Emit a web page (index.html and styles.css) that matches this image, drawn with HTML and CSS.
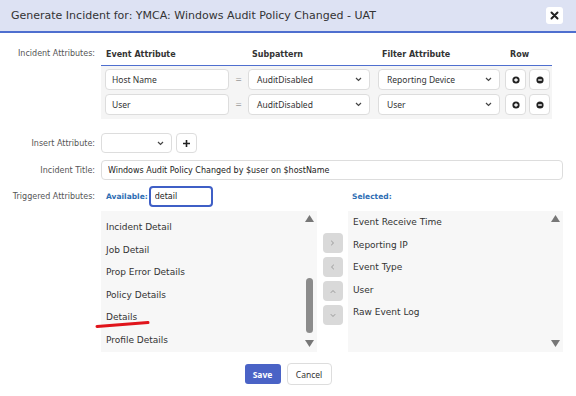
FILE: index.html
```html
<!DOCTYPE html>
<html lang="en">
<head>
    <meta charset="UTF-8">
    <title>Generate Incident</title>
    <link rel="stylesheet" href="styles.css">
</head>
<body>
    <div class="dialog">
        <div class="dialog-header">
            <span class="dialog-title">Generate Incident for: YMCA: Windows Audit Policy Changed - UAT</span>
            <button class="close-btn">
                <svg width="9" height="9" viewBox="0 0 9 9"><path d="M1.5 1.5L7.5 7.5M7.5 1.5L1.5 7.5" stroke="#222" stroke-width="2" stroke-linecap="round"/></svg>
            </button>
        </div>

        <div class="dialog-body">
            <!-- Incident attributes table -->
            <div class="form-row attr-row">
                <label class="form-label">Incident Attributes:</label>
                <div class="attr-table">
                    <div class="attr-head">
                        <span class="head-event">Event Attribute</span>
                        <span></span>
                        <span class="head-sub">Subpattern</span>
                        <span class="head-filter">Filter Attribute</span>
                        <span class="head-row">Row</span>
                    </div>
                    <div class="attr-body">
                        <div class="attr-line">
                            <input class="text-input" type="text" value="Host Name">
                            <span class="eq">=</span>
                            <div class="fake-select">
                                <span>AuditDisabled</span>
                                <svg width="7" height="5" viewBox="0 0 7 5"><polyline points="1,1 3.5,3.5 6,1" fill="none" stroke="#444" stroke-width="1.2"/></svg>
                            </div>
                            <div class="fake-select filter-select">
                                <span>Reporting Device</span>
                                <svg width="7" height="5" viewBox="0 0 7 5"><polyline points="1,1 3.5,3.5 6,1" fill="none" stroke="#444" stroke-width="1.2"/></svg>
                            </div>
                            <button class="row-btn">
                                <svg width="8" height="8" viewBox="0 0 8 8"><circle cx="4" cy="4" r="3.6" fill="#222"/><path d="M2.2 4H5.8M4 2.2V5.8" stroke="#fff" stroke-width="1.3"/></svg>
                            </button>
                            <button class="row-btn">
                                <svg width="8" height="8" viewBox="0 0 8 8"><circle cx="4" cy="4" r="3.6" fill="#222"/><path d="M2.2 4H5.8" stroke="#fff" stroke-width="1.4"/></svg>
                            </button>
                        </div>
                        <div class="attr-line">
                            <input class="text-input" type="text" value="User">
                            <span class="eq">=</span>
                            <div class="fake-select">
                                <span>AuditDisabled</span>
                                <svg width="7" height="5" viewBox="0 0 7 5"><polyline points="1,1 3.5,3.5 6,1" fill="none" stroke="#444" stroke-width="1.2"/></svg>
                            </div>
                            <div class="fake-select filter-select">
                                <span>User</span>
                                <svg width="7" height="5" viewBox="0 0 7 5"><polyline points="1,1 3.5,3.5 6,1" fill="none" stroke="#444" stroke-width="1.2"/></svg>
                            </div>
                            <button class="row-btn">
                                <svg width="8" height="8" viewBox="0 0 8 8"><circle cx="4" cy="4" r="3.6" fill="#222"/><path d="M2.2 4H5.8M4 2.2V5.8" stroke="#fff" stroke-width="1.3"/></svg>
                            </button>
                            <button class="row-btn">
                                <svg width="8" height="8" viewBox="0 0 8 8"><circle cx="4" cy="4" r="3.6" fill="#222"/><path d="M2.2 4H5.8" stroke="#fff" stroke-width="1.4"/></svg>
                            </button>
                        </div>
                    </div>
                </div>
            </div>

            <div class="form-row insert-row">
                <label class="form-label">Insert Attribute:</label>
                <div class="inline-group">
                    <div class="fake-select insert-select">
                        <span></span>
                        <svg width="7" height="5" viewBox="0 0 7 5"><polyline points="1,1 3.5,3.5 6,1" fill="none" stroke="#444" stroke-width="1.2"/></svg>
                    </div>
                    <button class="add-btn">
                        <svg width="9" height="9" viewBox="0 0 9 9"><path d="M4.5 1V8M1 4.5H8" stroke="#222" stroke-width="1.6"/></svg>
                    </button>
                </div>
            </div>

            <div class="form-row title-row">
                <label class="form-label">Incident Title:</label>
                <input class="title-input" type="text" value="Windows Audit Policy Changed by $user on $hostName">
            </div>

            <!-- Triggered attributes picker -->
            <div class="form-row trig-row">
                <label class="form-label">Triggered Attributes:</label>
                <div class="trig">
                    <div class="trig-head">
                        <span class="list-label">Available:</span>
                        <input class="search-input" type="text" value="detail">
                    </div>
                    <div></div>
                    <div class="trig-head sel-head">
                        <span class="list-label">Selected:</span>
                    </div>

                    <div class="list">
                        <ul class="list-items avail-items">
                            <li>Incident Detail</li>
                            <li>Job Detail</li>
                            <li>Prop Error Details</li>
                            <li>Policy Details</li>
                            <li>Details</li>
                            <li>Profile Details</li>
                        </ul>
                        <div class="scroll">
                            <svg width="9" height="7" viewBox="0 0 9 7"><polygon points="0,7 4.5,0 9,7" fill="#777"/></svg>
                            <div class="scroll-track"><div class="scroll-thumb"></div></div>
                            <svg width="9" height="7" viewBox="0 0 9 7"><polygon points="0,0 9,0 4.5,7" fill="#777"/></svg>
                        </div>
                        <svg class="mark" width="60" height="12" viewBox="0 0 60 12"><path d="M2 9.5L53 5.5" stroke="#e0141b" stroke-width="3" stroke-linecap="round"/></svg>
                    </div>

                    <div class="move-btns">
                        <button class="move-btn"><svg width="5" height="6" viewBox="0 0 5 6"><polyline points="1.2,0.8 3.5,3 1.2,5.2" fill="none" stroke="#999" stroke-width="1"/></svg></button>
                        <button class="move-btn"><svg width="5" height="6" viewBox="0 0 5 6"><polyline points="3.8,0.8 1.5,3 3.8,5.2" fill="none" stroke="#999" stroke-width="1"/></svg></button>
                        <button class="move-btn"><svg width="6" height="5" viewBox="0 0 6 5"><polyline points="0.8,3.8 3,1.5 5.2,3.8" fill="none" stroke="#999" stroke-width="1"/></svg></button>
                        <button class="move-btn"><svg width="6" height="5" viewBox="0 0 6 5"><polyline points="0.8,1.2 3,3.5 5.2,1.2" fill="none" stroke="#999" stroke-width="1"/></svg></button>
                    </div>

                    <div class="list">
                        <ul class="list-items sel-items">
                            <li>Event Receive Time</li>
                            <li>Reporting IP</li>
                            <li>Event Type</li>
                            <li>User</li>
                            <li>Raw Event Log</li>
                        </ul>
                        <div class="scroll">
                            <svg width="9" height="7" viewBox="0 0 9 7"><polygon points="0,7 4.5,0 9,7" fill="#777"/></svg>
                            <div class="scroll-track"></div>
                            <svg width="9" height="7" viewBox="0 0 9 7"><polygon points="0,0 9,0 4.5,7" fill="#777"/></svg>
                        </div>
                    </div>
                </div>
            </div>
        </div>

        <div class="dialog-footer">
            <button class="btn-save">Save</button>
            <button class="btn-cancel">Cancel</button>
        </div>
    </div>
</body>
</html>
```

FILE: styles.css
```css
* {
    box-sizing: border-box;
}

body {
    margin: 0;
    font-family: "DejaVu Sans", Verdana, sans-serif;
    color: #333;
    background-color: #fff;
}

.dialog {
    width: 576px;
    height: 396px;
    overflow: hidden;
}

.dialog-header {
    height: 33px;
    display: flex;
    align-items: center;
    justify-content: space-between;
    padding: 0 13px 0 11px;
    background-color: #dde2f3;
    border-bottom: 2px solid #4f6fcf;
}

.dialog-title {
    font-size: 11px;
    color: #333;
}

.close-btn {
    width: 17px;
    height: 17px;
    padding: 0;
    border: none;
    border-radius: 3px;
    background-color: #fff;
    display: flex;
    align-items: center;
    justify-content: center;
}

.dialog-body {
    padding: 10px 13px 0 0;
}

.form-row {
    display: grid;
    grid-template-columns: 95px 1fr;
    column-gap: 6px;
    align-items: center;
}

.form-label {
    font-size: 8px;
    color: #555;
    text-align: right;
}

/* incident attributes */
.attr-row {
    align-items: start;
}

.attr-row .form-label {
    line-height: 22px;
}

.attr-table {
    width: 451px;
}

.attr-head,
.attr-line {
    display: grid;
    grid-template-columns: 124px 19px 122px 130px 26px 24px;
    align-items: center;
}

.attr-head {
    height: 23px;
    padding-left: 4px;
    border-bottom: 1px solid #4f6fcf;
    font-size: 8px;
    font-weight: bold;
    color: #333;
}

.head-event {
    padding-left: 1px;
}

.head-sub {
    padding-left: 4px;
}

.head-filter {
    padding-left: 12px;
}

.head-row {
    grid-column: span 2;
    padding-left: 10px;
}

.attr-body {
    display: flex;
    flex-direction: column;
    gap: 4px;
    padding: 3px 2px 4px 4px;
    background-color: #f5f5f5;
}

.text-input {
    height: 21px;
    width: 124px;
    padding: 0 6px;
    border: 1px solid #ddd;
    border-radius: 4px;
    background-color: #fff;
    font-family: "Noto Sans", sans-serif;
    font-size: 8.5px;
    color: #333;
}

.eq {
    text-align: center;
    font-size: 8px;
    color: #999;
}

.fake-select {
    width: 122px;
    height: 21px;
    display: flex;
    align-items: center;
    justify-content: space-between;
    padding: 0 7px 0 8px;
    border: 1px solid #ddd;
    border-radius: 4px;
    background-color: #fff;
    font-family: "Noto Sans", sans-serif;
    font-size: 8.5px;
    color: #333;
}

.filter-select {
    justify-self: end;
}

.row-btn {
    width: 21px;
    height: 21px;
    justify-self: end;
    padding: 0;
    border: 1px solid #ddd;
    border-radius: 4px;
    background-color: #fff;
    display: flex;
    align-items: center;
    justify-content: center;
}

/* insert + title */
.insert-row {
    margin-top: 14px;
}

.inline-group {
    display: flex;
    align-items: center;
}

.insert-select {
    width: 71px;
    height: 20px;
}

.add-btn {
    width: 21px;
    height: 20px;
    margin-left: 4px;
    padding: 0;
    border: 1px solid #ddd;
    border-radius: 4px;
    background-color: #fff;
    display: flex;
    align-items: center;
    justify-content: center;
}

.title-row {
    margin-top: 7px;
}

.title-input {
    width: 100%;
    height: 20px;
    padding: 0 6px;
    border: 1px solid #ddd;
    border-radius: 4px;
    background-color: #fff;
    font-family: "DejaVu Sans", sans-serif;
    font-size: 8px;
    color: #222;
}

/* triggered attributes */
.trig-row {
    margin-top: 6px;
    align-items: start;
}

.trig-row .form-label {
    line-height: 21px;
}

.trig {
    display: grid;
    grid-template-columns: 216px 31px 215px;
    grid-template-rows: 21px 141px;
    row-gap: 4px;
}

.trig-head {
    display: flex;
    align-items: center;
    gap: 1px;
    padding-left: 5px;
}

.sel-head {
    padding-left: 4px;
}

.list-label {
    font-size: 7.5px;
    font-weight: bold;
    color: #2d6db3;
}

.search-input {
    width: 64px;
    height: 21px;
    padding: 0 4px;
    border: 2px solid #3f5fc6;
    border-radius: 4px;
    background-color: #fff;
    font-family: "DejaVu Sans", sans-serif;
    font-size: 8px;
    color: #222;
    outline: none;
}

.list {
    position: relative;
    display: flex;
    background-color: #f7f7f7;
}

.list-items {
    flex: 1;
    margin: 0;
    padding: 5px 0 0 5px;
    list-style: none;
    font-size: 9px;
    line-height: 22.5px;
    color: #333;
}

.sel-items {
    padding-top: 0;
}

.scroll {
    width: 16px;
    display: flex;
    flex-direction: column;
    align-items: center;
    padding: 4px 0 5px;
}

.scroll-track {
    flex: 1;
}

.scroll-thumb {
    width: 7px;
    height: 55px;
    margin-top: 56px;
    border-radius: 4px;
    background-color: #8c8c8c;
}

.mark {
    position: absolute;
    left: -6px;
    top: 106px;
    pointer-events: none;
}

.move-btns {
    display: flex;
    flex-direction: column;
    align-items: center;
    gap: 4px;
    padding-top: 22px;
}

.move-btn {
    width: 20px;
    height: 20px;
    padding: 0;
    border: none;
    border-radius: 4px;
    background-color: #d9d9d9;
    display: flex;
    align-items: center;
    justify-content: center;
}

/* footer */
.dialog-footer {
    display: flex;
    justify-content: center;
    align-items: center;
    gap: 6px;
    margin-top: 11px;
}

.btn-save {
    width: 36px;
    height: 20px;
    border: none;
    border-radius: 3px;
    background-color: #4a63c6;
    color: #fff;
    font-family: "Noto Sans", sans-serif;
    font-size: 8.5px;
    font-weight: bold;
}

.btn-cancel {
    width: 45px;
    height: 22px;
    border: 1px solid #ddd;
    border-radius: 4px;
    background-color: #fff;
    color: #333;
    font-family: "Noto Sans", sans-serif;
    font-size: 8.5px;
}
```
